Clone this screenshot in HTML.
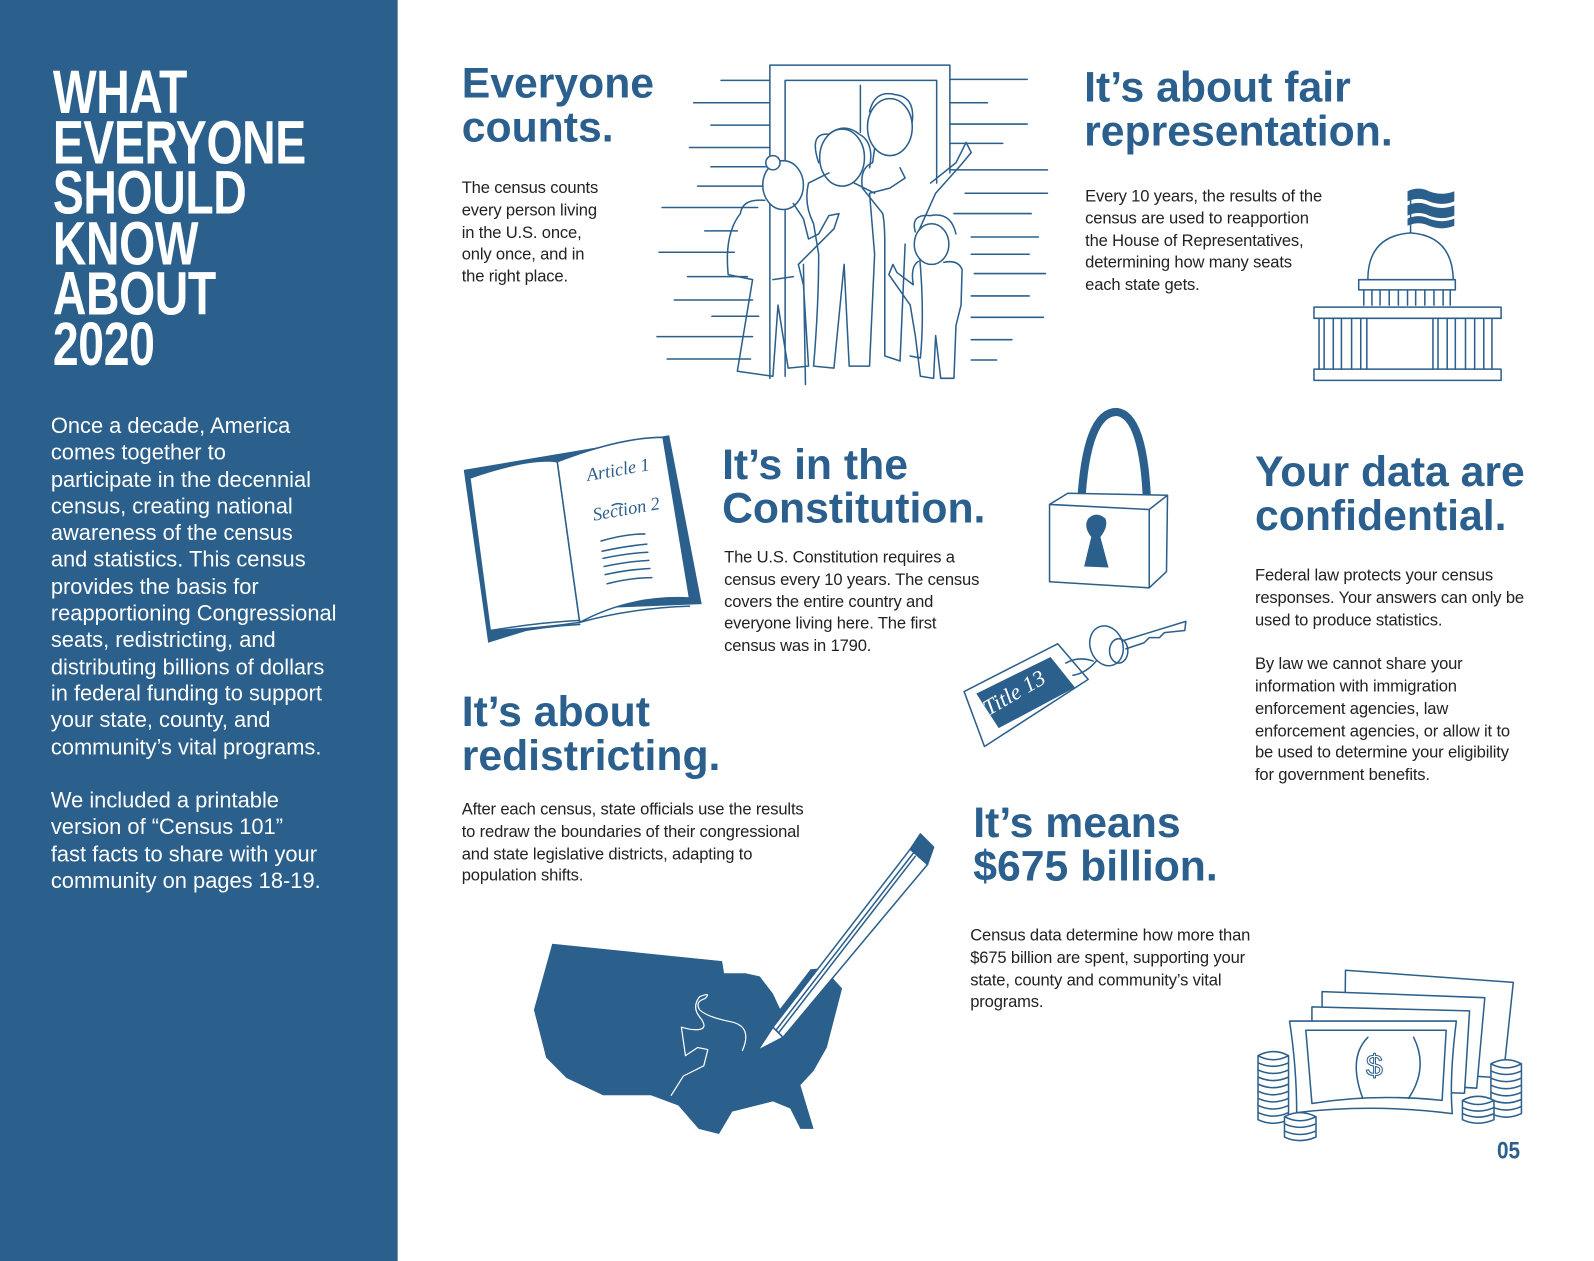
<!DOCTYPE html>
<html><head><meta charset="utf-8">
<style>
*{margin:0;padding:0;box-sizing:border-box}
body{width:1594px;height:1232px;background:#fff;position:relative;overflow:hidden;font-family:"Liberation Sans",sans-serif}
#w{position:absolute;left:0;top:0;width:1568px;height:1212px;transform:scale(1.017);transform-origin:0 0}
.panel{position:absolute;left:0;top:0;width:391px;height:1240px;background:#2b5f8c}
.big{position:absolute;left:52px;top:66px;color:#fff;font-family:"Liberation Sans",sans-serif;font-weight:bold;font-size:60px;line-height:49.5px;letter-spacing:-0.5px;transform:scaleX(0.76);transform-origin:left top;white-space:nowrap}
.intro{position:absolute;left:50px;color:#fff;font-size:21.5px;line-height:26.3px;letter-spacing:0;white-space:nowrap}
h2{position:absolute;color:#2a5f8e;font-family:"Liberation Sans",sans-serif;font-weight:bold;font-size:42px;line-height:43px;letter-spacing:0;white-space:nowrap}
p.b{position:absolute;color:#222;font-size:16.3px;line-height:21.8px;letter-spacing:-0.15px;white-space:nowrap}
.pg{position:absolute;left:1472px;top:1118px;color:#2a5f8e;font-family:"Liberation Sans",sans-serif;font-weight:bold;font-size:24px;transform:scaleX(0.85);transform-origin:left top}
svg{position:absolute;left:0;top:0}
</style></head><body><div id="w">
<div class="panel"></div>
<div class="big">WHAT<br>EVERYONE<br>SHOULD<br>KNOW<br>ABOUT<br>2020</div>
<div class="intro" style="top:406px">Once a decade, America<br>comes together to<br>participate in the decennial<br>census, creating national<br>awareness of the census<br>and statistics. This census<br>provides the basis for<br>reapportioning Congressional<br>seats, redistricting, and<br>distributing billions of dollars<br>in federal funding to support<br>your state, county, and<br>community’s vital programs.</div>
<div class="intro" style="top:774px">We included a printable<br>version of “Census 101”<br>fast facts to share with your<br>community on pages 18-19.</div>

<h2 style="left:454px;top:60px">Everyone<br>counts.</h2>
<p class="b" style="left:454px;top:175px">The census counts<br>every person living<br>in the U.S. once,<br>only once, and in<br>the right place.</p>

<h2 style="left:1066px;top:64px">It’s about fair<br>representation.</h2>
<p class="b" style="left:1067px;top:183px">Every 10 years, the results of the<br>census are used to reapportion<br>the House of Representatives,<br>determining how many seats<br>each state gets.</p>

<h2 style="left:710px;top:435px">It’s in the<br>Constitution.</h2>
<p class="b" style="left:712px;top:538px">The U.S. Constitution requires a<br>census every 10 years. The census<br>covers the entire country and<br>everyone living here. The first<br>census was in 1790.</p>

<h2 style="left:1234px;top:442px">Your data are<br>confidential.</h2>
<p class="b" style="left:1234px;top:556px">Federal law protects your census<br>responses. Your answers can only be<br>used to produce statistics.<br><br>By law we cannot share your<br>information with immigration<br>enforcement agencies, law<br>enforcement agencies, or allow it to<br>be used to determine your eligibility<br>for government benefits.</p>

<h2 style="left:454px;top:678px">It’s about<br>redistricting.</h2>
<p class="b" style="left:454px;top:786px">After each census, state officials use the results<br>to redraw the boundaries of their congressional<br>and state legislative districts, adapting to<br>population shifts.</p>

<h2 style="left:957px;top:787px">It’s means<br>$675 billion.</h2>
<p class="b" style="left:954px;top:910px">Census data determine how more than<br>$675 billion are spent, supporting your<br>state, county and community’s vital<br>programs.</p>

<div class="pg">05</div>

<svg width="1568" height="1212" viewBox="0 0 1568 1212" fill="none" stroke="#2b5f8c" stroke-width="1.5" stroke-linecap="round" stroke-linejoin="round">
<g>
<path d="M709 79H757M682 101H757M699 123H757M678 145H757M699 164H757M686 183H757M651 204H745M693 227H725M648 248H722M676 272H735M663 295H740M700 311H746M646 331H740M656 353H738"/>
<path d="M934 78H1010M934 101H971M934 122H1010M934 141H986M934 167H1030M949 190H1030M938 210H1014M955 233H1021M955 250H1012M958 269H1028M955 291H1012M955 312H1026M955 334H995M955 354H980"/>
<path d="M757 372V64H934V170M772 370V79H921V180"/>
<path d="M846 84V130"/>
<ellipse cx="875" cy="125" rx="22" ry="28" fill="#fff"/>
<path d="M855 110Q860 88 880 93Q900 95 897 120M860 146L858 160Q845 165 848 185L868 210Q870 220 870 240V350L885 355L890 240M895 350L905 352Q910 300 902 230L920 190L945 162L955 150L950 140L940 160L915 180"/>
<ellipse cx="828" cy="155" rx="22" ry="28" fill="#fff"/>
<path d="M805 160Q795 130 815 132Q830 120 845 132Q860 140 855 165M795 180Q790 200 800 220L805 250Q805 300 800 360L820 362L830 260L835 360L855 360L860 250L855 190L875 185L890 175L885 165M795 180L815 170M840 180L860 190"/>
<ellipse cx="770" cy="182" rx="20" ry="24" fill="#fff"/>
<circle cx="760" cy="160" r="7" fill="#fff"/>
<path d="M752 197Q730 195 728 210Q712 230 716 270L740 275L725 365L760 370L765 300L775 362L795 360L790 280L785 260L800 245L820 225L825 210L815 212L805 230L795 235L790 215L780 200M790 260L792 378M760 275L780 272"/>
<ellipse cx="916" cy="240" rx="17" ry="20" fill="#fff"/>
<path d="M900 228Q895 210 915 212Q935 208 940 230M903 257Q895 262 898 280L882 268L878 260L874 270L895 300L900 330L905 370L918 372L920 330L925 372L938 372L940 320L945 300L946 265Q942 255 928 258"/>
</g>
<g>
<path d="M1387 229V188" />
<path d="M1384 188Q1395 183 1405 188Q1418 193 1430 188V198Q1418 203 1405 198Q1395 193 1384 198Z M1384 202Q1395 197 1405 202Q1418 207 1430 202V212Q1418 217 1405 212Q1395 207 1384 212Z M1384 215Q1395 210 1405 215Q1418 220 1430 215V222Q1418 227 1405 222Q1395 217 1384 222Z" fill="#2b5f8c" stroke="none"/>
<path d="M1345 275Q1345 232 1387 229Q1428 232 1429 275"/>
<rect x="1336" y="275" width="95" height="10"/>
<path d="M1341 285V300M1349 285V300M1357 285V300M1366 285V300M1375 285V300M1384 285V300M1392 285V300M1401 285V300M1410 285V300M1419 285V300M1426 285V300"/>
<rect x="1292" y="302" width="184" height="11"/>
<path d="M1297 313V363M1302 313V363M1311 313V363M1319 313V363M1329 313V363M1338 313V363M1344 313V363M1409 313V363M1414 313V363M1423 313V363M1431 313V363M1441 313V363M1450 313V363M1459 313V363M1467 313V363"/>
<rect x="1292" y="363" width="184" height="11"/>
</g>
<g>
<path d="M456 462L480 632L590 598L690 594L658 428" fill="#2b5f8c" stroke="none"/>
<path d="M462 470Q520 450 548 454L570 612Q530 618 482 620Z" fill="#fff"/>
<path d="M548 454Q610 430 652 430L678 588Q620 585 570 612Z" fill="#fff"/>
<path d="M482 620Q530 612 570 610M484 626Q530 616 570 614M570 612Q620 598 678 596"/>
<g font-family="Liberation Serif,serif" font-style="italic" fill="#2b5f8c" stroke="none" font-size="18"><text x="578" y="473" transform="rotate(-10 578 473)">Article 1</text><text x="584" y="512" transform="rotate(-10 584 512)">Section 2</text></g>
<path d="M591 532Q615 525 634 525M592 542Q615 537 636 535M593 549Q617 544 637 543M594 557Q618 552 638 551M595 565Q618 560 639 559M597 574Q620 568 641 568M602 497Q607 494 612 496"/>
</g>
<g>
<path d="M1063 496Q1068 405 1098 405Q1125 408 1128 497" stroke-width="8"/>
<path d="M1032 496L1050 485L1148 487L1130 501ZM1032 496L1032 572L1130 578L1130 501M1130 578L1147 562L1148 487" fill="#fff"/>
<path d="M1070 510Q1078 502 1087 510Q1090 518 1082 528L1090 558L1066 557L1073 528Q1065 518 1070 510Z" fill="#2b5f8c" stroke="none"/>
</g>
<g>
<path d="M948 680L1040 633L1070 668L968 734Z" fill="#fff"/>
<path d="M960 682L1033 646L1057 676L982 716Z" fill="#2b5f8c" stroke="none"/>
<text x="972" y="704" font-family="Liberation Serif,serif" font-style="italic" font-size="22" fill="#fff" stroke="none" transform="rotate(-30 972 704)">Title 13</text>
<path d="M1048 652Q1060 645 1075 650M1055 664Q1068 662 1078 650"/>
<ellipse cx="1088" cy="635" rx="16" ry="20" transform="rotate(-20 1088 635)"/>
<ellipse cx="1100" cy="640" rx="9" ry="12"/>
<path d="M1104 630L1166 611L1165 620L1145 622L1140 627L1130 627L1125 632L1107 638"/>
</g>
<path d="M543 928L710 945L712 957L733 957L747 960L760 977L767 992L797 953L810 952L828 972L813 1030L800 1053L787 1067L800 1110L787 1110L777 1090L760 1083L720 1093L707 1115L687 1110L667 1087L640 1077L593 1077L557 1060L537 1040L525 993Z" fill="#2b5f8c" stroke="none"/>
<path d="M730 1033Q740 1010 720 1005Q695 1000 688 993Q683 985 693 982Q700 975 688 980Q680 990 688 1000Q700 1015 678 1012L670 1010L674 1038L686 1030L696 1032L692 1048L672 1058L660 1077" stroke="#fff" stroke-width="1.2"/>
<g fill="#fff">
<path d="M745 1033L760 1010L770 1020Z" />
<path d="M760 1010L895 835L912 850L770 1020Z"/>
<path d="M766 1015L900 842M763 1013L898 839"/>
<path d="M895 835L905 820L918 833L912 850Z" fill="#2b5f8c"/>
</g>
<g fill="#fff">
<path d="M1323 954L1488 966L1478 1060L1322 1050Z"/>
<path d="M1300 975L1460 981L1452 1070L1300 1060Z"/>
<path d="M1290 990L1445 994L1440 1075L1290 1070Z"/>
<path d="M1268 1004L1432 1004Q1425 1060 1428 1095Q1350 1085 1275 1094Q1275 1050 1268 1004Z"/>
<path d="M1284 1013L1422 1013L1418 1082Q1350 1075 1290 1085Z"/>
<path d="M1345 1020Q1325 1040 1340 1080M1390 1020Q1405 1050 1385 1080"/>
<text x="1343" y="1058" font-family="Liberation Sans,sans-serif" font-size="30" fill="none" stroke="#2b5f8c" stroke-width="1">$</text>
<path d="M1237 1038h30v70h-30z" stroke="none"/>
<path d="M1237 1038Q1252 1030 1267 1038Q1252 1046 1237 1038M1237 1045Q1252 1052 1267 1045M1237 1052Q1252 1059 1267 1052M1237 1059Q1252 1066 1267 1059M1237 1066Q1252 1073 1267 1066M1237 1073Q1252 1080 1267 1073M1237 1080Q1252 1087 1267 1080M1237 1087Q1252 1094 1267 1087M1237 1094Q1252 1101 1267 1094M1237 1101Q1252 1108 1267 1101M1237 1038V1101M1267 1038V1101"/>
<path d="M1263 1098h31v25h-31z" stroke="none"/>
<path d="M1263 1098Q1278 1090 1294 1098Q1278 1106 1263 1098M1263 1105Q1278 1112 1294 1105M1263 1112Q1278 1119 1294 1112M1263 1118Q1278 1125 1294 1118M1263 1098V1118M1294 1098V1118"/>
<path d="M1466 1046h30v60h-30z" stroke="none"/>
<path d="M1466 1046Q1481 1038 1496 1046Q1481 1054 1466 1046M1466 1053Q1481 1060 1496 1053M1466 1060Q1481 1067 1496 1060M1466 1067Q1481 1074 1496 1067M1466 1074Q1481 1081 1496 1074M1466 1081Q1481 1088 1496 1081M1466 1088Q1481 1095 1496 1088M1466 1095Q1481 1102 1496 1095M1466 1046V1095M1496 1046V1095"/>
<path d="M1438 1082h31v25h-31z" stroke="none"/>
<path d="M1438 1082Q1453 1074 1469 1082Q1453 1090 1438 1082M1438 1089Q1453 1096 1469 1089M1438 1095Q1453 1102 1469 1095M1438 1101Q1453 1108 1469 1101M1438 1082V1101M1469 1082V1101"/>
</g>
</svg>
</div></body></html>
